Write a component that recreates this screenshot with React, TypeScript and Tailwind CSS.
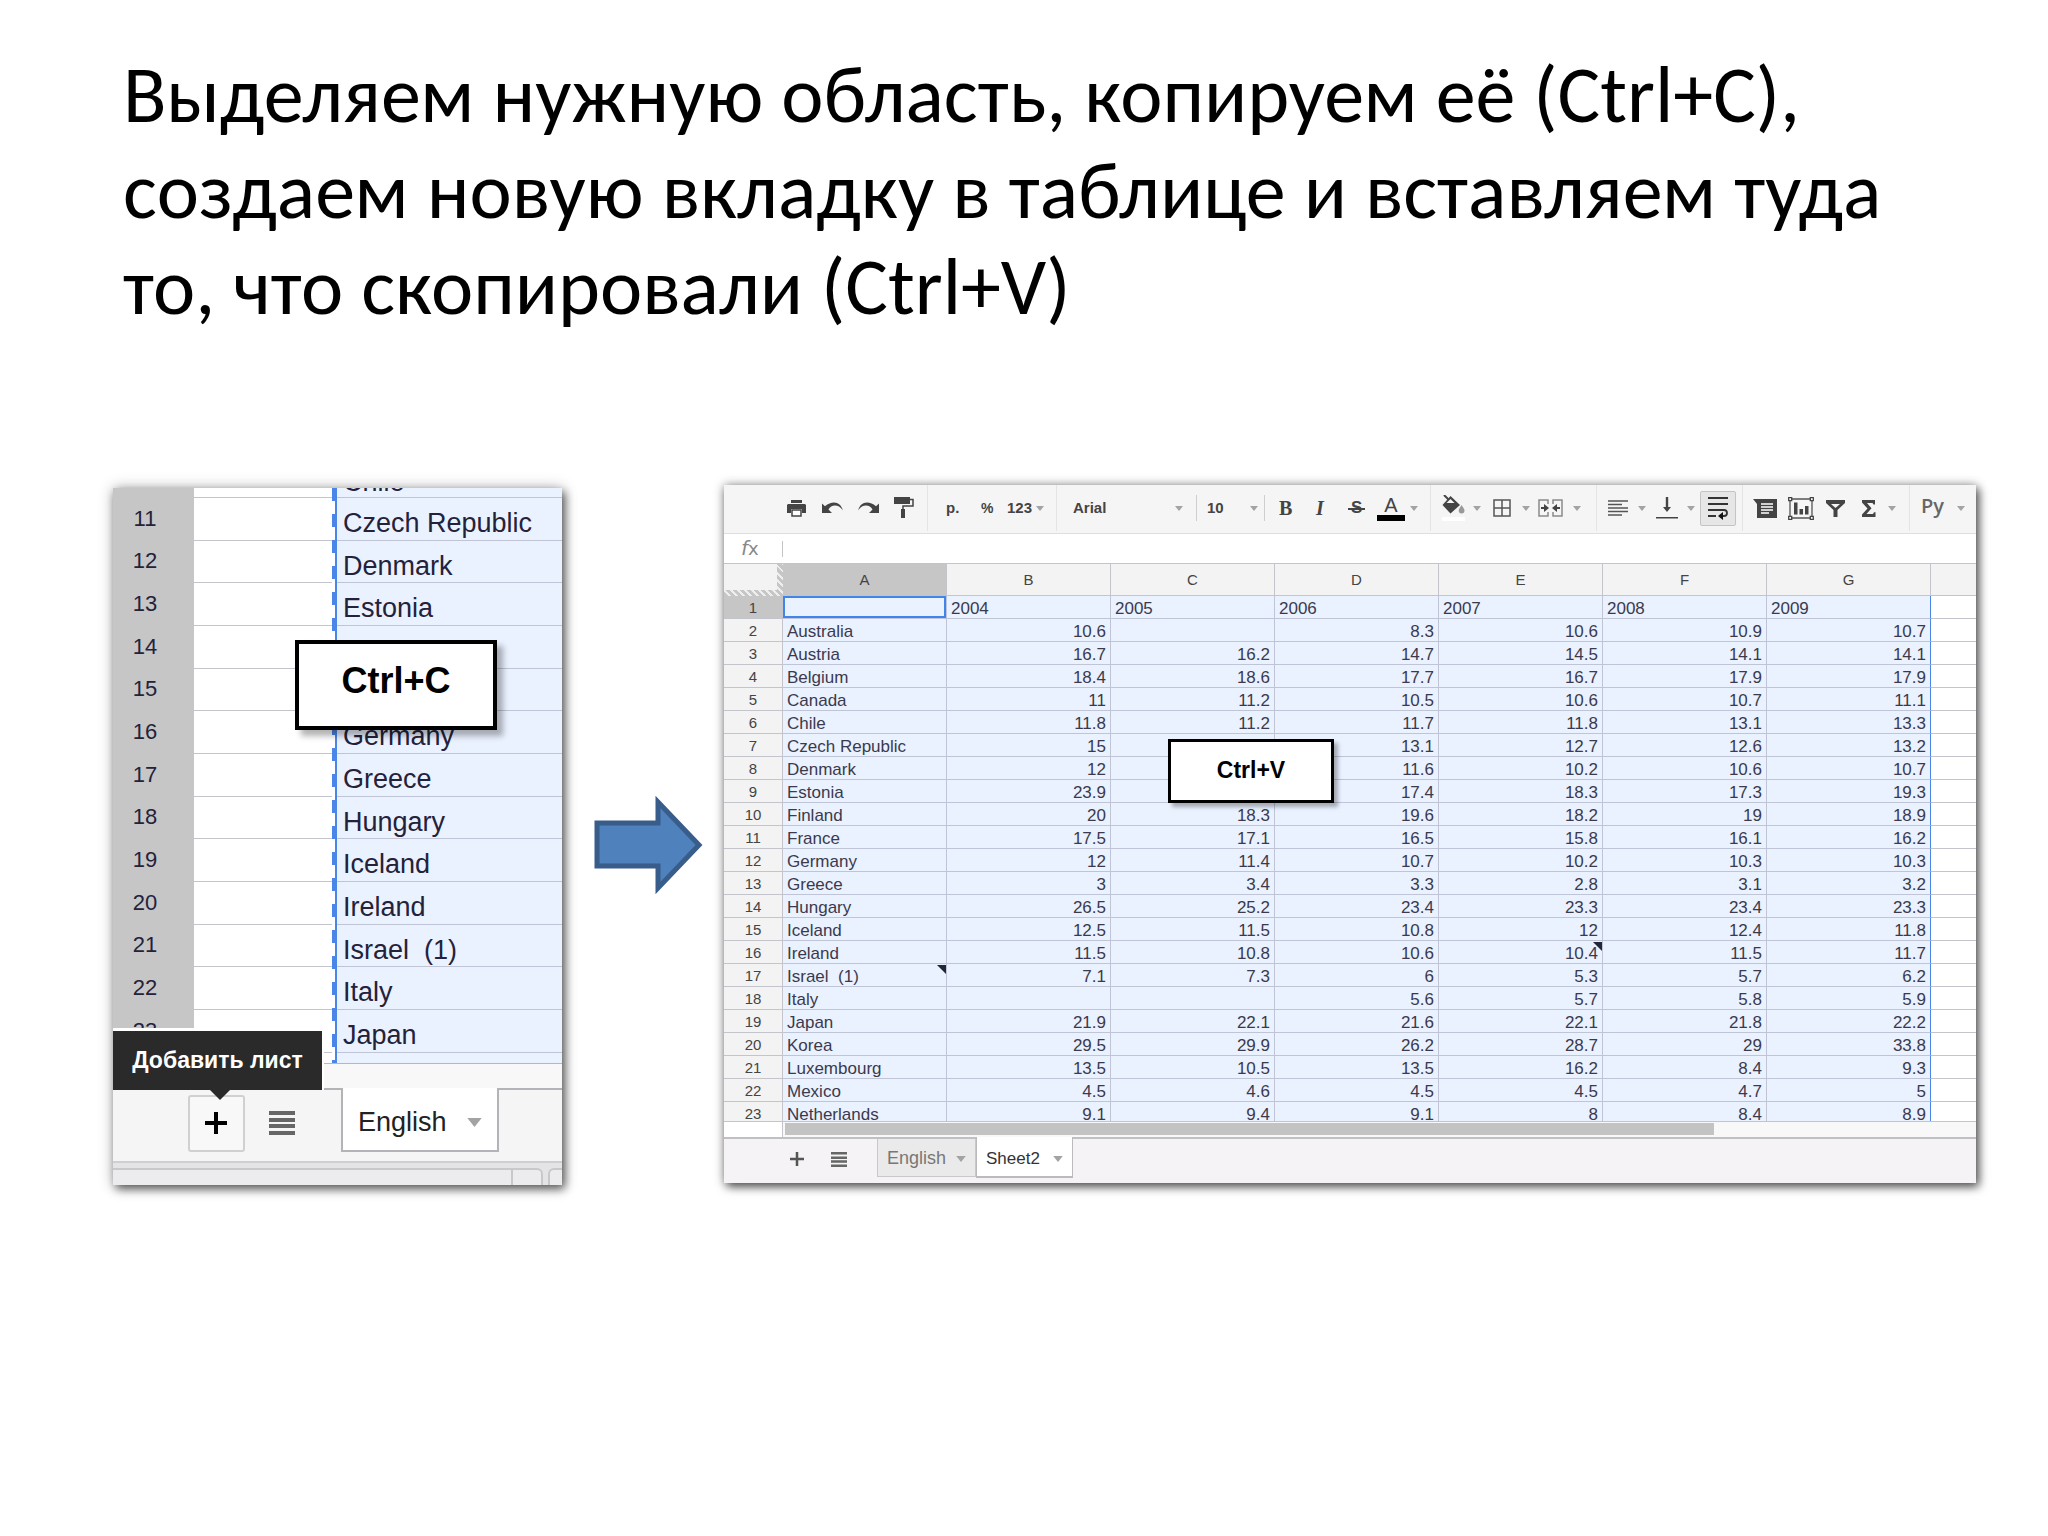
import type { ReactNode } from "react";

const copiedRows = [
  "Czech Republic",
  "Denmark",
  "Estonia",
  "",
  "",
  "Germany",
  "Greece",
  "Hungary",
  "Iceland",
  "Ireland",
  "Israel\u00a0 (1)",
  "Italy",
  "Japan",
];

const columns = ["A", "B", "C", "D", "E", "F", "G"];

const sheetRows: string[][] = [
  ["", "2004", "2005", "2006", "2007", "2008", "2009"],
  ["Australia", "10.6", "", "8.3", "10.6", "10.9", "10.7"],
  ["Austria", "16.7", "16.2", "14.7", "14.5", "14.1", "14.1"],
  ["Belgium", "18.4", "18.6", "17.7", "16.7", "17.9", "17.9"],
  ["Canada", "11", "11.2", "10.5", "10.6", "10.7", "11.1"],
  ["Chile", "11.8", "11.2", "11.7", "11.8", "13.1", "13.3"],
  ["Czech Republic", "15", "", "13.1", "12.7", "12.6", "13.2"],
  ["Denmark", "12", "", "11.6", "10.2", "10.6", "10.7"],
  ["Estonia", "23.9", "", "17.4", "18.3", "17.3", "19.3"],
  ["Finland", "20", "18.3", "19.6", "18.2", "19", "18.9"],
  ["France", "17.5", "17.1", "16.5", "15.8", "16.1", "16.2"],
  ["Germany", "12", "11.4", "10.7", "10.2", "10.3", "10.3"],
  ["Greece", "3", "3.4", "3.3", "2.8", "3.1", "3.2"],
  ["Hungary", "26.5", "25.2", "23.4", "23.3", "23.4", "23.3"],
  ["Iceland", "12.5", "11.5", "10.8", "12", "12.4", "11.8"],
  ["Ireland", "11.5", "10.8", "10.6", "10.4", "11.5", "11.7"],
  ["Israel\u00a0 (1)", "7.1", "7.3", "6", "5.3", "5.7", "6.2"],
  ["Italy", "", "", "5.6", "5.7", "5.8", "5.9"],
  ["Japan", "21.9", "22.1", "21.6", "22.1", "21.8", "22.2"],
  ["Korea", "29.5", "29.9", "26.2", "28.7", "29", "33.8"],
  ["Luxembourg", "13.5", "10.5", "13.5", "16.2", "8.4", "9.3"],
  ["Mexico", "4.5", "4.6", "4.5", "4.5", "4.7", "5"],
  ["Netherlands", "9.1", "9.4", "9.1", "8", "8.4", "8.9"],
];

// cells that carry a note marker in the corner
const notes = ["A17", "E16"];

function Caret({ className = "" }: { className?: string }) {
  return (
    <svg viewBox="0 0 8 5" className={`h-[5px] w-2 shrink-0 ${className}`}>
      <path d="M0 0h8L4 5z" fill="#a3a3a3" />
    </svg>
  );
}

function Tool({
  label,
  className,
  children,
}: {
  label: string;
  className: string;
  children: ReactNode;
}) {
  return (
    <button
      aria-label={label}
      className={`flex h-full shrink-0 items-center ${className}`}
    >
      {children}
    </button>
  );
}

function Divider() {
  return <div className="h-full w-px shrink-0 bg-[#e4e4e6]" />;
}

function ShortDivider() {
  return <div className="h-[26px] w-px shrink-0 bg-[#cfcfcf]" />;
}

function ListIcon({ className }: { className: string }) {
  return (
    <svg viewBox="0 0 26 24" className={className} preserveAspectRatio="none">
      <path d="M0 0h26v4H0zM0 7h26v4H0zM0 13h26v4H0zM0 20h26v4H0z" fill="#666" />
    </svg>
  );
}

function Toolbar() {
  return (
    <div className="flex h-[49px] items-center overflow-hidden border-b border-[#dedee0] bg-[#f5f5f6] pb-[2px] pl-[63px] font-bold text-[#444]">
      <Tool label="Print" className="w-[35px]">
        <svg viewBox="0 0 19 17" className="h-[17px] w-[19px]" fill="#444">
          <path d="M4 0h11v3H4zM1 4h17l1 1v8h-4V9H4v4H0V5z" />
          <path d="M5 10h9v6H5z" fill="#fff" stroke="#444" strokeWidth="1.5" />
        </svg>
      </Tool>
      <Tool label="Undo" className="w-9">
        <svg viewBox="0 0 21 12" className="h-3 w-[21px]" fill="#444">
          <path d="M0 1.500l3 2.700C6 1.500 9 .4 12 .4c4.500 0 7.500 3 9 8C18.500 5 16 3.500 13 3.500c-3 0-5 1.200-6.500 3.900L10 11H0z" />
        </svg>
      </Tool>
      <Tool label="Redo" className="w-9">
        <svg viewBox="0 0 21 12" className="h-3 w-[21px]" fill="#444">
          <path d="M21 1.500l-3 2.700C15 1.500 12 .4 9 .4c-4.500 0-7.500 3-9 8C2.500 5 5 3.500 8 3.500c3 0 5 1.200 6.500 3.900L11 11h10z" />
        </svg>
      </Tool>
      <Tool label="Paint format" className="w-[33px]">
        <svg viewBox="0 0 20 22" className="h-[22px] w-5" fill="#444">
          <path d="M0 0h16v7H0zM7 12h4v9H7z" />
          <path d="M16 2.500h3v6.500H9v4" fill="none" stroke="#444" strokeWidth="1.500" />
        </svg>
      </Tool>
      <Divider />
      <div className="flex h-full items-center pl-[18px] text-[15px]">
        <button className="w-[35px] text-left">p.</button>
        <button className="w-[26px] text-left text-sm">%</button>
        <button className="flex w-[49px] items-center gap-1">
          123
          <Caret />
        </button>
      </div>
      <Divider />
      <label aria-label="Font" className="flex items-center pr-[13px] pl-4">
        <select className="w-[102px] appearance-none bg-transparent text-[15px]">
          <option>Arial</option>
        </select>
        <Caret />
      </label>
      <ShortDivider />
      <label aria-label="Font size" className="flex items-center pr-[6px] pl-[10px]">
        <select className="w-[43px] appearance-none bg-transparent text-[15px]">
          <option>10</option>
        </select>
        <Caret />
      </label>
      <ShortDivider />
      <Tool label="Bold" className="ml-[14px] w-[35px]">
        <span className="font-['Liberation_Serif'] text-[20px] leading-5">B</span>
      </Tool>
      <Tool label="Italic" className="w-[34px]">
        <span className="pl-[2px] font-['Liberation_Serif'] text-[20px] leading-5 italic">I</span>
      </Tool>
      <Tool label="Strikethrough" className="w-[29px]">
        <span className="relative px-[3px] font-['Liberation_Sans'] text-[17px] leading-5">
          S
          <span className="absolute inset-x-0 top-[10px] h-[2px] bg-[#444]" />
        </span>
      </Tool>
      <Tool label="Text color" className="w-[53px] gap-[5px]">
        <span className="w-7 border-b-[6px] border-black text-center text-[20px] leading-[19px] font-normal">
          A
        </span>
        <Caret />
      </Tool>
      <Divider />
      <Tool label="Fill color" className="ml-[11px] w-[51px] gap-2">
        <svg viewBox="0 0 23 26" className="h-[26px] w-[23px]">
          <path d="M2 0l7 7" stroke="#444" strokeWidth="2" />
          <path d="M8.500 1L18 10 8.500 18.500.5 10z" fill="#444" />
          <path d="M8.500 4l4 4h-8z" fill="#f5f5f6" />
          <path d="M19.500 10c1.500 2.500 3 4 3 5.500a2.900 2.900 0 0 1-5.800 0c0-1.500 1.500-3 2.800-5.500z" fill="#999" />
          <path d="M0 22h23v4H0z" fill="#fff" />
        </svg>
        <Caret />
      </Tool>
      <Tool label="Borders" className="w-[45px] gap-[11px]">
        <svg viewBox="0 0 18 18" className="h-[18px] w-[18px]" fill="none" stroke="#555" strokeWidth="1.500">
          <path d="M1 1h16v16H1zM9 1v16M1 9h16" />
        </svg>
        <Caret />
      </Tool>
      <Tool label="Merge cells" className="w-[58px] gap-[10px]">
        <svg viewBox="0 0 25 18" className="h-[18px] w-[25px]">
          <path
            d="M10 5V1H1v16h9v-4M15 5V1h9v16h-9v-4"
            fill="none"
            stroke="#8a8a8a"
            strokeWidth="1.500"
          />
          <path d="M3 8h3V5l5 4-5 4v-3H3zM22 8h-3V5l-5 4 5 4v-3h3z" fill="#444" />
        </svg>
        <Caret />
      </Tool>
      <Divider />
      <Tool label="Horizontal align" className="ml-[11px] w-12 gap-[10px]">
        <svg viewBox="0 0 20 16" className="h-4 w-5" stroke="#555" strokeWidth="1.500">
          <path d="M0 1h20M0 4.500h14M0 8h20M0 11.500h20M0 15h14" />
        </svg>
        <Caret />
      </Tool>
      <Tool label="Vertical align" className="w-11 gap-[9px]">
        <svg viewBox="0 0 22 22" className="h-[22px] w-[22px]" fill="#444">
          <path d="M9.800 0h2.400v10H15l-4 5-4-5h2.800zM0 20h22v1.500H0z" />
        </svg>
        <Caret />
      </Tool>
      <button
        aria-label="Wrap text"
        className="flex h-[35px] w-9 shrink-0 items-center justify-center rounded-[2px] border border-[#c4c4c4] bg-[#e6e6e6]"
      >
        <svg viewBox="0 0 20 24" className="h-6 w-5" fill="none" stroke="#333" strokeWidth="1.800">
          <path d="M0 2h20M0 8h20M0 14h16c4 0 4 6 0 6h-2M0 20h8" />
          <path d="M10 20l5-4v8z" fill="#111" stroke="none" />
        </svg>
      </button>
      <div className="ml-[6px] h-full w-px shrink-0 bg-[#e4e4e6]" />
      <Tool label="Comment" className="ml-[10px] w-[35px]">
        <svg viewBox="0 0 24 19" className="h-[19px] w-6">
          <path d="M0 0h24v19H4V5z" fill="#444" />
          <path d="M8 5h12M8 8h12M8 11h12M8 14h8" stroke="#fff" strokeWidth="1.300" />
        </svg>
      </Tool>
      <Tool label="Chart" className="w-[38px]">
        <svg viewBox="0 0 26 23" className="h-[23px] w-[26px]">
          <path d="M2 2h22v19H2z" fill="none" stroke="#555" strokeWidth="1.300" />
          <path
            d="M.7.7h3v3h-3zM22.300.7h3v3h-3zM.7 19.300h3v3h-3zM22.300 19.300h3v3h-3z"
            fill="#fff"
            stroke="#444"
            strokeWidth="1.300"
          />
          <path d="M6 5.500h3.500v12H6zM11.500 12H15v5.500h-3.500zM17 9h3.500v8.500H17z" fill="#444" />
        </svg>
      </Tool>
      <Tool label="Filter" className="w-9">
        <svg viewBox="0 0 19 17" className="h-[17px] w-[19px]">
          <path d="M0 0h19v3l-7.500 7v7h-4v-7L0 3z" fill="#444" />
          <path d="M5 4h9L9.500 8z" fill="#f5f5f6" />
        </svg>
      </Tool>
      <Tool label="Functions" className="w-[47px] gap-3">
        <svg viewBox="0 0 14 17" className="h-[17px] w-[14px]">
          <path d="M0 0h13v4.500h-1.500L10.500 3H5l4.500 5.300L4.500 14H11l1-1.800h1.500V17H0v-2.500l5.500-6L0 2.500z" fill="#444" />
        </svg>
        <Caret />
      </Tool>
      <Divider />
      <Tool label="Input tools" className="ml-[11px] gap-[13px]">
        <span className="pb-1 font-['Open_Sans'] text-[20px] leading-6 font-semibold text-[#666]">Ру</span>
        <Caret />
      </Tool>
    </div>
  );
}

function NoteMarker() {
  return (
    <svg viewBox="0 0 9 9" className="absolute top-px right-0 h-[9px] w-[9px]">
      <path d="M0 0h9v9z" fill="#222638" />
    </svg>
  );
}

function Sheet() {
  return (
    <table className="w-full table-fixed border-separate border-spacing-0 text-[17px] leading-[18px] text-[#3b3a4d]">
      <thead>
        <tr className="h-8 text-[15px] text-[#444]">
          <th className="w-[59px] bg-[repeating-linear-gradient(45deg,#c6c6c6_0px,#c6c6c6_3px,#eeeeee_3px,#eeeeee_5px)] p-0 align-top">
            <div className="mr-[6px] h-[26px] bg-[#f3f3f3]" />
          </th>
          {columns.map((col) => (
            <th
              key={col}
              className={`w-[164px] border-r border-b border-[#c4c4cc] p-0 font-normal ${
                col === "A" ? "bg-[#c6c6c6]" : "bg-[#f3f3f4]"
              }`}
            >
              {col}
            </th>
          ))}
          <th className="border-b border-[#c4c4cc] bg-[#f3f3f4]" />
        </tr>
      </thead>
      <tbody>
        {sheetRows.map((row, i) => (
          <tr key={i} className="h-[23px]">
            <th
              className={`border-r border-b border-[#c4c4cc] px-0 pt-[2px] pb-0 text-[15px] font-normal text-[#444] ${
                i === 0 ? "bg-[#c6c6c6]" : "bg-[#f3f3f4]"
              }`}
            >
              {i + 1}
            </th>
            {row.map((value, j) => (
              <td
                key={j}
                className={`relative border-r border-b border-b-[#bfc4d6] bg-[#eaf1ff] px-1 pt-1 pb-0 whitespace-nowrap ${
                  i === 0 || j === 0 ? "text-left" : "text-right"
                } ${j === 6 ? "border-r-[#4a86e8]" : "border-r-[#bfc4d6]"}`}
              >
                {value}
                {i === 0 && j === 0 && (
                  <div className="absolute inset-0 border-2 border-[#4285e8]" />
                )}
                {notes.includes(columns[j] + (i + 1)) && <NoteMarker />}
              </td>
            ))}
            <td className="border-b border-[#c4c4cc] bg-white p-0" />
          </tr>
        ))}
      </tbody>
    </table>
  );
}

function CopyPanel() {
  return (
    <section className="relative mt-[3px] w-[449px] shrink-0 bg-[#f5f5f6] shadow-[3px_4px_9px_rgba(0,0,0,0.6),0_0_14px_rgba(0,0,0,0.25)]">
      <div className="relative h-[576px] overflow-hidden border-b border-[#b8b8bc]">
        <table className="w-full table-fixed border-separate border-spacing-0 text-[27px] leading-[30px] text-[#24223a]">
          <tbody>
            <tr>
              <th className="w-[81px] bg-[#c6c6c6] p-0" />
              <td className="w-[142px] border-b border-[#c4c4cc] bg-white p-0" />
              <td className="border-b border-[#bfc4d6] bg-[#eaf1ff] py-0 pr-0 pl-[7px]">
                <div className="flex h-[9px] items-end overflow-hidden pb-1">
                  <span className="leading-[22px]">Chile</span>
                </div>
              </td>
            </tr>
            {copiedRows.map((name, i) => (
              <tr key={i} className={i % 3 === 1 ? "h-[42px]" : "h-[43px]"}>
                <th className="bg-[#c6c6c6] pt-0 pr-[17px] pb-[2px] pl-0 text-center text-[22px] leading-7 font-normal">
                  {i + 11}
                </th>
                <td className="border-b border-[#c4c4cc] bg-white p-0" />
                <td className="border-b border-[#bfc4d6] bg-[#eaf1ff] pt-2 pr-0 pb-0 pl-[7px]">{name}</td>
              </tr>
            ))}
            <tr className="h-[10px]">
              <th className="bg-[#c6c6c6] p-0" />
              <td className="bg-white p-0" />
              <td className="bg-[#eaf1ff] p-0" />
            </tr>
          </tbody>
        </table>
        {/* marching ants along the copied range */}
        <div className="absolute inset-y-0 left-[219px] w-[5px] border-r-2 border-[#4a86e8] bg-[repeating-linear-gradient(to_bottom,#4a86e8_0px,#4a86e8_13px,#fff_13px,#fff_26px)]" />
      </div>
      <div className="h-[26px] border-b-2 border-[#b4b4b8] bg-[#f8f8f9]" />
      <div className="flex h-[71px] items-start bg-[#f5f5f6] pl-[75px]">
        <button
          aria-label="Добавить лист"
          className="mt-[5px] flex h-[57px] w-[57px] items-center justify-center rounded-[3px] border-2 border-[#d0d0d2] bg-[#f8f8f8] pr-[2px] pb-[2px]"
        >
          <svg viewBox="0 0 22 22" className="h-[22px] w-[22px]" stroke="#000" strokeWidth="4">
            <path d="M11 0v22M0 11h22" />
          </svg>
        </button>
        <button aria-label="Все листы" className="mt-[21px] ml-6">
          <ListIcon className="h-6 w-[26px]" />
        </button>
        <button className="-mt-[2px] ml-[46px] flex h-[64px] w-[158px] items-center justify-between border-2 border-t-0 border-[#b4b4b8] bg-white px-[15px] pt-[7px] text-[27px] text-[#222]">
          English
          <Caret className="h-[9px]! w-[15px]!" />
        </button>
      </div>
      <div className="h-6 overflow-hidden border-t-2 border-[#cfcfd1] bg-[#e4e4e6] pt-[5px]">
        <div className="flex h-[22px]">
          <div className="flex-1 border-t-2 border-[#c8c8ca] bg-[#ececee]" />
          <div className="mr-[5px] w-8 rounded-tr-md border-2 border-[#c8c8ca] bg-[#ececee]" />
          <div className="w-[14px] rounded-tl-md border-t-2 border-l-2 border-[#c8c8ca] bg-[#ececee]" />
        </div>
      </div>
      <div className="absolute top-[540px] left-0 flex h-[62px] w-[211px] flex-col border-t-[3px] border-r-2 border-white bg-[#2a2a2a]">
        <span className="flex flex-1 items-center justify-center text-[23px] font-bold whitespace-nowrap text-white">
          Добавить лист
        </span>
        <svg viewBox="0 0 20 10" className="absolute top-full left-[97px] h-[10px] w-5">
          <path d="M0 0h20L10 10z" fill="#2a2a2a" />
        </svg>
      </div>
      <div className="absolute top-[152px] left-[182px] flex h-[90px] w-[202px] items-center justify-center border-4 border-black bg-white pb-2 text-[36px] font-bold text-black shadow-[6px_6px_6px_rgba(0,0,0,0.3)]">
        Ctrl+C
      </div>
    </section>
  );
}

function PastePanel() {
  return (
    <section className="relative min-w-0 flex-1 bg-[#f5f5f6] shadow-[3px_4px_9px_rgba(0,0,0,0.6),0_0_10px_rgba(0,0,0,0.35)]">
      <Toolbar />
      <label className="flex h-[30px] items-center border-b border-[#c4c4cc] bg-white">
        <span className="w-[58px] pl-[17px] font-['DejaVu_Sans'] text-[20px] leading-6 text-[#888] italic">
          f<span className="text-[18px] not-italic">x</span>
        </span>
        <input
          aria-label="Formula"
          className="h-4 flex-1 border-l border-[#c4c4c4] outline-none"
        />
      </label>
      <div className="h-[557px] overflow-hidden">
        <Sheet />
      </div>
      <div className="flex h-[16px] border-t border-[#c4c4cc] bg-[#f8f8f8]">
        <div className="w-[59px] shrink-0 border-r border-[#c4c4cc] bg-white" />
        <div className="flex-1 pt-px pl-[2px]">
          <div className="h-3 w-[78%] bg-[#c3c3c3]" />
        </div>
      </div>
      <div className="flex h-[46px] items-start border-t-2 border-[#c0c0c4] bg-[#f5f3f5] pl-[66px]">
        <button aria-label="Add sheet" className="mt-[13px]">
          <svg viewBox="0 0 14 14" className="h-[14px] w-[14px]" stroke="#555" strokeWidth="2.500">
            <path d="M7 0v14M0 7h14" />
          </svg>
        </button>
        <button aria-label="All sheets" className="mt-[13px] ml-[27px]">
          <ListIcon className="h-[15px] w-4" />
        </button>
        <button className="ml-[30px] flex h-[38px] w-[99px] items-center justify-between border border-t-0 border-[#c8c8c8] bg-[#eaeaea] pt-[2px] pr-[9px] pl-[9px] text-[18px] text-[#777]">
          English
          <Caret className="h-[6px]! w-[10px]!" />
        </button>
        <button className="-mt-[2px] flex h-[41px] w-[97px] items-center justify-between border-x border-b-2 border-[#bbb] bg-white pt-[4px] pr-[9px] pl-[9px] text-[17px] text-[#333]">
          Sheet2
          <Caret className="h-[6px]! w-[10px]!" />
        </button>
      </div>
      <div className="absolute top-[254px] left-[444px] flex h-[64px] w-[166px] items-center justify-center border-[3px] border-black bg-white pb-[2px] text-[23px] font-bold text-black shadow-[4px_4px_4px_rgba(0,0,0,0.3)]">
        Ctrl+V
      </div>
    </section>
  );
}

export default function App() {
  return (
    <main className="min-h-screen bg-white pt-[47px] pr-[72px] pb-12 pl-[113px] font-['Liberation_Sans',Arial,sans-serif]">
      <h1 className="pl-[10px] font-[Carlito,Calibri,Lato,sans-serif] text-[80px] leading-[96px] whitespace-nowrap text-black">
        Выделяем нужную область, копируем её (Ctrl+C),
        <br />
        создаем новую вкладку в таблице и вставляем туда
        <br />
        то, что скопировали (Ctrl+V)
      </h1>
      <div className="mt-[150px] flex items-start">
        <CopyPanel />
        <svg viewBox="0 0 110 98" className="mt-[311px] mr-5 ml-8 h-[98px] w-[110px] shrink-0">
          <path
            d="M3 27h61V6l41 43-41 43V70H3z"
            fill="#4f81bd"
            stroke="#385d8a"
            strokeWidth="5"
            strokeMiterlimit="10"
          />
        </svg>
        <PastePanel />
      </div>
    </main>
  );
}
